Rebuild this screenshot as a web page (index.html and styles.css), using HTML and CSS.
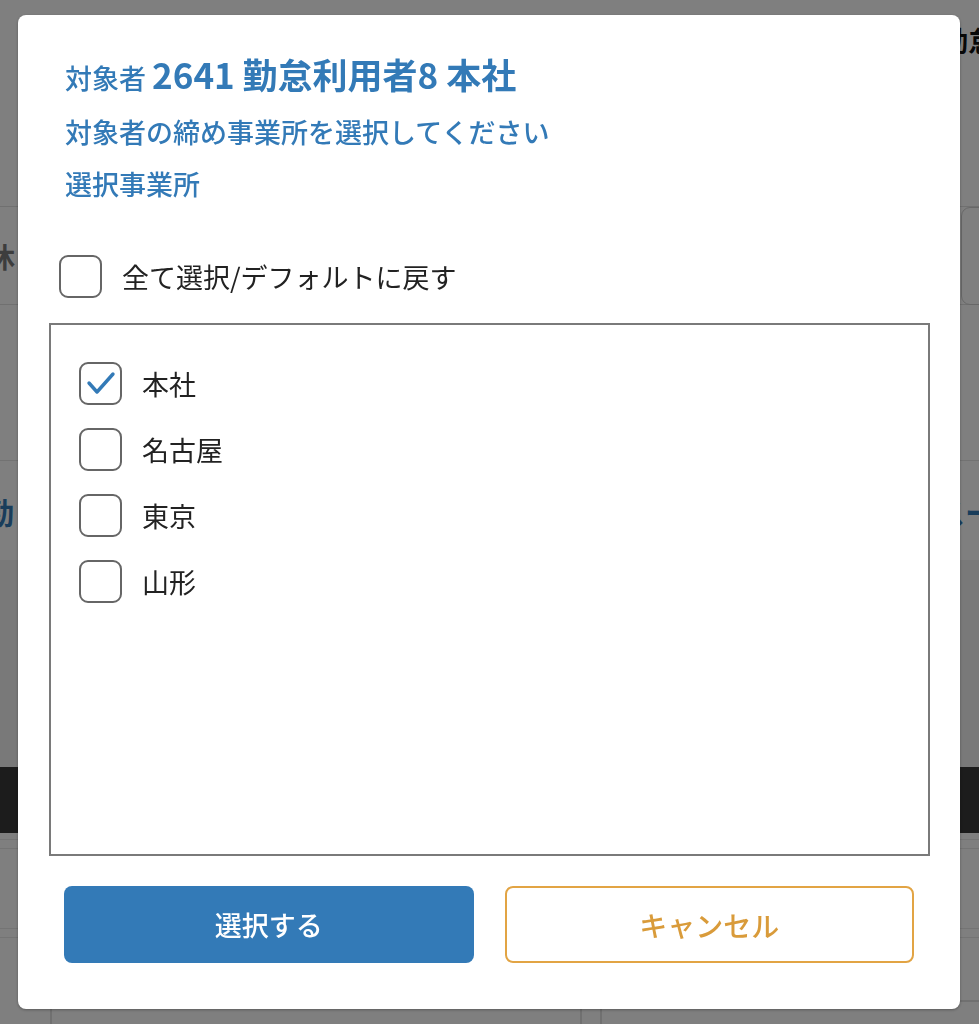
FILE: index.html
```html
<!DOCTYPE html>
<html>
  <head>
    <meta charset="utf-8">
    <title>締め事業所の選択</title>
    <link rel="stylesheet" href="styles.css">
  </head>
  <body>
    <div class="page">
      <header class="page-head"><span class="page-title">勤怠管理</span></header>
      <div class="page-band"></div>
      <div class="page-row">
        <span class="row-label">休</span>
        <div class="row-input"></div>
      </div>
      <div class="page-gap"></div>
      <div class="page-row2">
        <span class="row-link">勤</span>
        <span class="row-link row-link-right">スー</span>
      </div>
      <div class="page-section"></div>
      <div class="page-bar"></div>
      <div class="page-rule"></div>
      <div class="page-rule page-rule-low"></div>
      <div class="page-cards">
        <div class="page-card"></div>
        <div class="page-card"></div>
      </div>
    </div>

    <div class="overlay">
      <div class="modal">
        <div class="modal-head">
          <h1 class="modal-title">対象者 <span class="modal-name">2641 勤怠利用者8 本社</span></h1>
          <p class="modal-text">対象者の締め事業所を選択してください</p>
          <p class="modal-text">選択事業所</p>
        </div>

        <label class="check-row check-all">
          <span class="checkbox"></span>
          <span class="check-label">全て選択/デフォルトに戻す</span>
        </label>

        <div class="office-list">
          <label class="check-row">
            <span class="checkbox checked">
              <svg width="30" height="24" viewBox="0 0 30 24"><polyline points="3,12 11,21 27,3" fill="none" stroke="#337ab7" stroke-width="3.4" stroke-linecap="round" stroke-linejoin="round"/></svg>
            </span>
            <span class="check-label">本社</span>
          </label>
          <label class="check-row">
            <span class="checkbox"></span>
            <span class="check-label">名古屋</span>
          </label>
          <label class="check-row">
            <span class="checkbox"></span>
            <span class="check-label">東京</span>
          </label>
          <label class="check-row">
            <span class="checkbox"></span>
            <span class="check-label">山形</span>
          </label>
        </div>

        <div class="modal-actions">
          <button class="btn btn-primary">選択する</button>
          <button class="btn btn-cancel">キャンセル</button>
        </div>
      </div>
    </div>
  </body>
</html>
```

FILE: styles.css
```css
* {
  box-sizing: border-box;
}

body {
  margin: 0;
  overflow: hidden;
  font-family: "Noto Sans CJK JP", "Noto Sans", sans-serif;
  background-color: #fff;
  color: #222;
}

/* page behind the dialog */
.page {
  width: 979px;
  height: 1024px;
  overflow: hidden;
}

.page-head {
  height: 80px;
  padding-left: 940px;
  line-height: 80px;
  white-space: nowrap;
}

.page-title {
  font-size: 28px;
  font-weight: 700;
  color: #111;
}

.page-band {
  height: 126px;
}

.page-row {
  display: flex;
  justify-content: space-between;
  align-items: center;
  height: 99px;
  border-top: 1px solid #e0e0e0;
  border-bottom: 1px solid #e0e0e0;
}

.row-label {
  margin-left: -13px;
  font-size: 28px;
  font-weight: 700;
  color: #7a7a7a;
}

.row-input {
  width: 60px;
  height: 98px;
  margin-right: -42px;
  border: 1px solid #d0d0d0;
  border-radius: 9px;
}

.page-gap {
  height: 155px;
}

.page-row2 {
  display: flex;
  justify-content: space-between;
  align-items: center;
  height: 100px;
  border-top: 1px solid #e4e4e4;
  white-space: nowrap;
}

.row-link {
  margin-left: -16px;
  font-size: 30px;
  font-weight: 700;
  color: #337ab7;
}

.row-link-right {
  margin-left: 0;
  margin-right: -16px;
}

.page-section {
  height: 207px;
  background-color: #f2f2f2;
}

.page-bar {
  height: 66px;
  background-color: #383838;
}

.page-rule {
  height: 10px;
  margin-top: 6px;
  border-top: 1px solid #e8e8e8;
  border-bottom: 1px solid #e8e8e8;
}

.page-rule-low {
  margin-top: 79px;
}

.page-cards {
  display: flex;
  gap: 18px;
  margin-top: 62px;
  padding-left: 50px;
}

.page-card {
  flex-shrink: 0;
  width: 532px;
  height: 80px;
  border: 2px solid #e0e0e0;
  border-radius: 9px;
}

/* dialog */
.overlay {
  position: fixed;
  inset: 0;
  display: flex;
  padding: 15px 19px 15px 18px;
  background-color: rgba(0, 0, 0, 0.5);
}

.modal {
  flex: 1;
  display: flex;
  flex-direction: column;
  padding: 35px 30px 46px 31px;
  background-color: #fff;
  border-radius: 8px;
  box-shadow: 0 1px 3px rgba(0, 0, 0, 0.3);
}

.modal-head {
  padding: 0 16px;
  color: #337ab7;
}

.modal-title {
  height: 56px;
  margin: 0;
  font-size: 27px;
  font-weight: 500;
  line-height: 56px;
  white-space: nowrap;
}

.modal-name {
  font-size: 35px;
  font-weight: 700;
  line-height: 1;
}

.modal-text {
  margin: 0;
  font-size: 27px;
  font-weight: 500;
  line-height: 52px;
}

.check-row {
  display: flex;
  align-items: center;
  gap: 20px;
  height: 66px;
}

.check-all {
  flex-shrink: 0;
  height: 44px;
  margin-top: 44px;
  padding-left: 10px;
}

.checkbox {
  display: flex;
  align-items: center;
  justify-content: center;
  width: 43px;
  height: 43px;
  border: 2px solid #666;
  border-radius: 9px;
  background-color: #fff;
}

.check-label {
  font-size: 27px;
  color: #222;
}

.office-list {
  flex-shrink: 0;
  height: 533px;
  margin-top: 25px;
  padding: 25px 28px;
  border: 2px solid #7a7a7a;
}

.modal-actions {
  display: grid;
  grid-template-columns: 1fr 1fr;
  gap: 31px;
  margin-top: 30px;
  padding: 0 16px 0 15px;
}

.btn {
  height: 77px;
  border-radius: 8px;
  font-family: inherit;
  font-size: 27px;
  font-weight: 500;
  cursor: pointer;
}

.btn-primary {
  border: none;
  background-color: #337ab7;
  color: #fff;
}

.btn-cancel {
  border: 2px solid #e2a444;
  background-color: #fff;
  color: #d99b3a;
  font-size: 28px;
}
```
